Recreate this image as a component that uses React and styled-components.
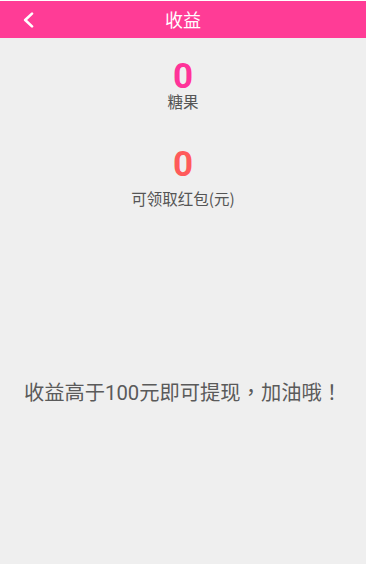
import styled, { createGlobalStyle } from "styled-components";

// ****** Global ******
const GlobalStyle = createGlobalStyle`
  html, body {
    margin: 0;
    padding: 0;
    background: #ffffff;
  }
  body {
    font-family: "Roboto", "Noto Sans CJK SC", sans-serif;
  }
`;

// ****** Page ******
const Page = styled.div`
  width: 366px;
  height: 563px;
  margin-top: 1px;
  background-color: #efefef;
  display: flex;
  flex-direction: column;
  align-items: center;
`;

// ****** Header ******
const Header = styled.header`
  width: 100%;
  height: 37px;
  background-color: #ff3c96;
  display: flex;
  align-items: center;
  justify-content: center;
  position: relative;
  flex-shrink: 0;
`;

const BackButton = styled.button`
  position: absolute;
  left: 19px;
  top: 8px;
  width: 18px;
  height: 22px;
  padding: 0;
  border: none;
  background: none;
  display: flex;
  align-items: center;
  justify-content: center;
  cursor: pointer;
`;

const Title = styled.h1`
  margin: 0;
  color: #ffffff;
  font-family: "Noto Sans CJK SC", sans-serif;
  font-size: 18px;
  font-weight: 400;
  line-height: 37px;
`;

// ****** Stats ******
const Stat = styled.div`
  display: flex;
  flex-direction: column;
  align-items: center;
  margin-top: ${(props) => props.$top}px;
`;

const Value = styled.span`
  font-family: "Roboto", sans-serif;
  font-weight: 700;
  font-size: 35px;
  line-height: 30px;
  color: ${(props) => props.$color};
`;

const Label = styled.span`
  margin-top: ${(props) => props.$gap}px;
  font-family: "Noto Sans CJK SC", sans-serif;
  font-size: 15.5px;
  font-weight: 400;
  line-height: 16px;
  color: #555555;
`;

// ****** Notice ******
const Notice = styled.p`
  margin: 175px 0 0;
  font-family: "Roboto", "Noto Sans CJK TC", sans-serif;
  font-size: 20.3px;
  line-height: 24px;
  color: #5a5a5a;
  white-space: nowrap;
`;

const ChevronLeft = () => (
  <svg width="13" height="16" viewBox="0 0 13 16">
    <polyline
      points="10,1.6 3.2,8 10,14.4"
      fill="none"
      stroke="#ffffff"
      strokeWidth="2.6"
      strokeLinecap="round"
      strokeLinejoin="round"
    />
  </svg>
);

const App = () => {
  return (
    <>
      <GlobalStyle />
      <Page>
        <Header>
          <BackButton aria-label="返回">
            <ChevronLeft />
          </BackButton>
          <Title>收益</Title>
        </Header>

        <Stat $top={24}>
          <Value $color="#ff3399">0</Value>
          <Label $gap={1}>糖果</Label>
        </Stat>

        <Stat $top={41}>
          <Value $color="#ff5a5a">0</Value>
          <Label $gap={10}>可领取红包(元)</Label>
        </Stat>

        <Notice>收益高于100元即可提现，加油哦！</Notice>
      </Page>
    </>
  );
};

export default App;
